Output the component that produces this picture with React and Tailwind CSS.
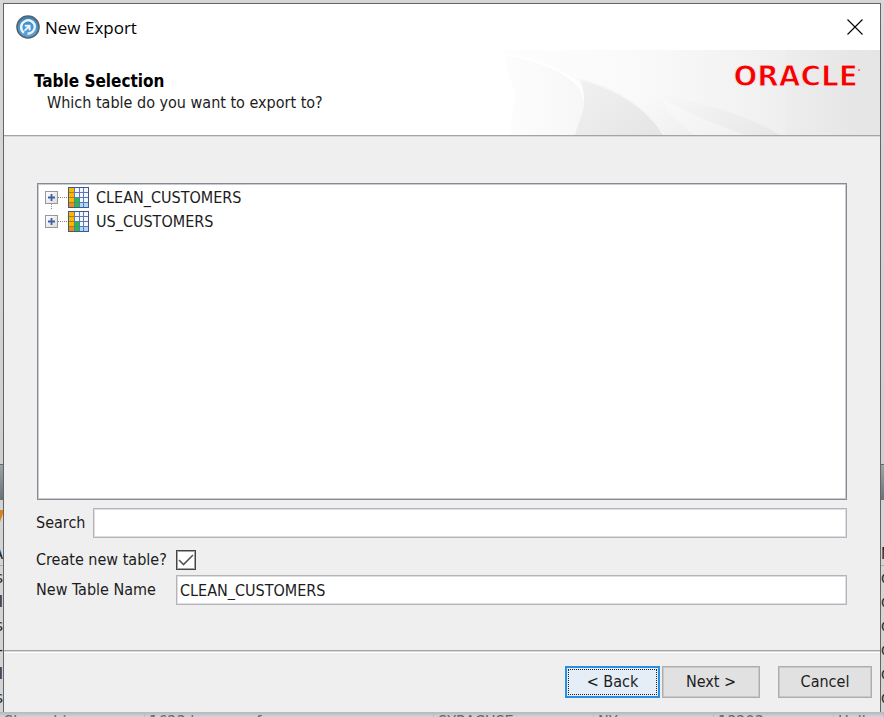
import React, { useState } from "react";

const leftRows = ["s", "I", "s", "-", "I", "s"];
const rightRows = ["d", "d", "d", "d", "d", "d"];
const bottomCells = [
  { text: "Shropshire", width: "w-[145px]" },
  { text: "1623 lane ave f", width: "w-[289px]" },
  { text: "SYRACUSE", width: "w-[160px]" },
  { text: "NY", width: "w-[120px]" },
  { text: "13203", width: "w-[120px]" },
  { text: "Hall", width: "w-[50px]" },
];

function EdgeStrip({ heading, rows, side, accent }) {
  const align = side === "left" ? "items-end" : "items-start";
  return (
    <div className={`flex w-[3px] flex-col overflow-hidden bg-[#d4d4d4] ${align}`}>
      <div className="h-[464px] w-full shrink-0 bg-gradient-to-b from-[#d8d8d8] to-[#cfcfcf]" />
      <div className="h-9 w-full shrink-0 border-t border-[#666b6e] bg-gradient-to-b from-[#9da5a9] to-[#687276]" />
      <div className="h-[42px] w-full shrink-0 pt-[10px]">
        {accent && <div className="h-3 w-full bg-[#dc8218] [clip-path:polygon(0_0,100%_0,100%_30%,0_100%)]" />}
      </div>
      <div className="h-6 shrink-0 border-b border-[#aaa] leading-6">{heading}</div>
      {rows.map((row, i) => (
        <div key={i} className="h-6 shrink-0 leading-6">{row}</div>
      ))}
    </div>
  );
}

function Backdrop() {
  return (
    <div aria-hidden="true" className="absolute inset-0 flex flex-col overflow-hidden text-base text-[#222]">
      <div className="flex min-h-0 flex-1 justify-between">
        <EdgeStrip side="left" heading="A" rows={leftRows} accent />
        <EdgeStrip side="right" heading="N" rows={rightRows} />
      </div>
      <div className="flex h-[5px] shrink-0 overflow-hidden bg-gradient-to-b from-[#b4b8bc] to-[#d2d6da] text-[#666]">
        {bottomCells.map((cell) => (
          <div key={cell.text} className={`${cell.width} shrink-0 border-r border-[#bcbcbc] pl-1 leading-5`}>
            {cell.text}
          </div>
        ))}
      </div>
    </div>
  );
}

function AppIcon() {
  return (
    <svg width="24" height="24" viewBox="0 0 24 24" aria-hidden="true">
      <defs>
        <linearGradient id="disc" x1="0" y1="0" x2="0" y2="1">
          <stop offset="0" stopColor="#3584bd" />
          <stop offset="1" stopColor="#5aa6df" />
        </linearGradient>
      </defs>
      <circle cx="12" cy="12" r="11" fill="url(#disc)" stroke="#59626b" strokeWidth="1.6" />
      <path d="M8 17.8C3.8 14.6 4.4 8.4 8.8 6.2C13.5 3.8 19.2 7 18.8 12.2C18.5 16.2 15.2 18.6 11.5 18.8" fill="none" stroke="#eaf3fa" strokeWidth="2.4" />
      <path d="M8.8 10.8H13.6V15.2" fill="none" stroke="#eaf3fa" strokeWidth="2" />
      <path d="M13.4 11L8.6 15.6" fill="none" stroke="#eaf3fa" strokeWidth="2" />
    </svg>
  );
}

function TableIcon() {
  return (
    <svg width="21" height="21" viewBox="0 0 21 21" shapeRendering="crispEdges" aria-hidden="true">
      <rect width="21" height="21" fill="#f4f7fd" />
      <rect x="1" y="1" width="5" height="14" fill="#fbb800" />
      <rect x="1" y="15" width="5" height="5" fill="#f08c10" />
      <rect x="6" y="11" width="5" height="9" fill="#1cc62c" />
      <rect x="11" y="15" width="9" height="5" fill="#a9d8ff" />
      <path d="M6.5 0V21M11.5 0V21M15.5 0V21M6 5.5H21M6 10.5H21M6 15.5H21" stroke="#5c78b8" fill="none" />
      <path d="M1 5.5H6M1 10.5H6M1 15.5H6" stroke="#b07c14" fill="none" />
      <rect x=".5" y=".5" width="20" height="20" fill="none" stroke="#435788" />
    </svg>
  );
}

function HeaderArt() {
  return (
    <svg className="absolute inset-y-0 right-0 h-full w-[420px]" viewBox="0 0 420 85" preserveAspectRatio="none" aria-hidden="true">
      <defs>
        <linearGradient id="base" x1="0" x2="1">
          <stop offset="0" stopColor="#fff" />
          <stop offset=".45" stopColor="#f9f9f9" />
          <stop offset=".75" stopColor="#f0f0f0" />
          <stop offset="1" stopColor="#e6e6e6" />
        </linearGradient>
        <linearGradient id="leaf" x1="0" y1="0" x2="1" y2="0">
          <stop offset="0" stopColor="#fdfdfd" />
          <stop offset="1" stopColor="#f7f7f7" />
        </linearGradient>
        <linearGradient id="wing" x1="0" y1="0" x2="1" y2="1">
          <stop offset="0" stopColor="#f1f1f1" />
          <stop offset="1" stopColor="#e5e5e5" />
        </linearGradient>
        <linearGradient id="shade" x1="0" y1="0" x2="1" y2="1">
          <stop offset=".3" stopColor="#ddd" stopOpacity="0" />
          <stop offset="1" stopColor="#d8d8d8" stopOpacity=".35" />
        </linearGradient>
        <linearGradient id="ray" x1="0" y1="0" x2="1" y2="1">
          <stop offset="0" stopColor="#f9f9f9" />
          <stop offset="1" stopColor="#f1f1f1" />
        </linearGradient>
      </defs>
      <rect width="420" height="85" fill="url(#base)" />
      <path d="M119 29C200 40 280 60 320 85H203C190 60 153 36 119 29Z" fill="url(#shade)" />
      <path d="M0 85L20 0H42L55 45L50 85Z" fill="#fff" />
      <path d="M43 4C80 10 124 26 124 51C124 63 117 75 115 85H50L55 45Z" fill="url(#leaf)" />
      <path d="M43 4C80 10 124 26 124 51" stroke="#fff" strokeWidth="2" fill="none" />
      <path d="M119 29C153 36 190 60 203 85H115C117 75 124 64 124 52C124 43 123 35 119 29Z" fill="url(#wing)" />
      <path d="M121 30C158 38 190 61 204 85" stroke="#f6f6f6" strokeWidth="1.5" fill="none" />
      <path d="M204 50C228 63 260 77 286 85H234C220 73 206 64 204 50Z" fill="url(#ray)" />
      <path d="M326 0H420V85H326Z" fill="#dedede" opacity=".12" />
    </svg>
  );
}

function TreeRow({ name, last }) {
  return (
    <li className="flex h-6 items-center">
      <div className="flex h-6 w-[13px] flex-col items-center">
        <div className="h-[6px]" />
        <button
          type="button"
          aria-label={`Expand ${name}`}
          className="flex size-[13px] shrink-0 items-center justify-center border border-[#989898] bg-gradient-to-br from-white to-[#dcdcdc]"
        >
          <svg width="9" height="9" viewBox="0 0 9 9" aria-hidden="true">
            <path d="M4.5 1V8M1 4.5H8" stroke="#3f5fa8" strokeWidth="1.8" fill="none" />
          </svg>
        </button>
        {!last && <div className="w-px flex-1 border-l border-dotted border-[#888]" />}
      </div>
      <div className="mr-px h-px w-[9px] border-t border-dotted border-[#888]" />
      <TableIcon />
      <span className="pt-px pl-[7px]">{name}</span>
    </li>
  );
}

const field = "min-w-0 flex-1 border border-[#b4b4ba] bg-white px-[3px] shadow-[inset_0_0_0_1px_#dedee2] outline-none";
const pushButton = "h-8 border border-[#adadad] bg-[#e1e1e1] shadow-[inset_0_0_0_1px_#c8c8c8]";

export default function App() {
  const [search, setSearch] = useState("");
  const [create, setCreate] = useState(true);
  const [tableName, setTableName] = useState("CLEAN_CUSTOMERS");

  return (
    <div className="relative flex h-screen min-h-[500px] flex-col bg-[#d6d6d6] px-[3px] pt-[3px] pb-[5px] font-['DejaVu_Sans_Condensed','DejaVu_Sans',sans-serif] text-base text-[#1c1c1c]">
      <Backdrop />
      <main className="relative flex min-h-0 flex-1 flex-col border-x border-t border-[#646464] bg-[#efefef]">
        <div className="flex h-[46px] shrink-0 items-center bg-white pr-[17px] pl-3 font-['Open_Sans',sans-serif] text-[17px] text-black">
          <AppIcon />
          <h1 className="flex-1 pt-px pl-[5px]">New Export</h1>
          <button type="button" aria-label="Close">
            <svg width="16" height="16" viewBox="0 0 16 16" aria-hidden="true">
              <path d="M.5 .5L15.5 15.5M15.5 .5L.5 15.5" stroke="#000" strokeWidth="1.1" />
            </svg>
          </button>
        </div>

        <header className="relative flex h-[86px] shrink-0 justify-between border-b border-[#a4a4a4] bg-white pr-5 pl-[30px]">
          <HeaderArt />
          <div className="relative pt-5 leading-[22px]">
            <h2 className="text-[17px] font-bold text-black">Table Selection</h2>
            <p className="pl-[13px]">Which table do you want to export to?</p>
          </div>
          <div className="relative flex pt-[11px] font-['DejaVu_Sans',sans-serif] text-[28px] leading-8 font-bold text-[#f80000] [-webkit-text-stroke:1px_#ededed]">
            ORACLE
            <span className="mt-2 size-[2px] rounded-full bg-[#f86060]" />
          </div>
        </header>

        <div className="flex min-h-0 flex-1 flex-col border-t border-[#dadada] pt-[46px] pr-[33px] pb-[45px] pl-8">
          <ul className="ml-px min-h-20 flex-1 overflow-auto border border-[#868c92] bg-white py-px pl-[7px] shadow-[inset_0_0_0_1px_#c8ccd0]">
            <TreeRow name="CLEAN_CUSTOMERS" />
            <TreeRow name="US_CUSTOMERS" last />
          </ul>
          <div className="mt-2 flex h-[30px] shrink-0 items-center">
            <label htmlFor="search" className="w-[57px]">Search</label>
            <input id="search" value={search} onChange={(e) => setSearch(e.target.value)} className={`${field} h-[30px]`} />
          </div>
          <div className="mt-3 flex h-5 shrink-0 items-center">
            <label htmlFor="create" className="w-[140px]">Create new table?</label>
            <span className="relative flex size-5">
              <input
                id="create"
                type="checkbox"
                checked={create}
                onChange={(e) => setCreate(e.target.checked)}
                className="size-5 appearance-none border border-[#444] bg-white shadow-[inset_0_0_0_1px_#a4a4a4]"
              />
              {create && (
                <svg className="pointer-events-none absolute inset-0" width="20" height="20" viewBox="0 0 20 20" aria-hidden="true">
                  <path d="M3 10L7.5 14.5L17 5" stroke="#555" strokeWidth="1.6" fill="none" />
                </svg>
              )}
            </span>
          </div>
          <div className="mt-[5px] flex h-[30px] shrink-0 items-center">
            <label htmlFor="name" className="w-[140px]">New Table Name</label>
            <input id="name" value={tableName} onChange={(e) => setTableName(e.target.value)} className={`${field} h-[30px]`} />
          </div>
        </div>

        <footer className="flex h-[62px] shrink-0 items-center justify-end border-t border-[#a4a4a4] pr-2 shadow-[inset_0_1px_0_#d8d8d8,inset_0_2px_0_#fff]">
          <button type="button" className="h-8 w-[95px] border-2 border-[#2a8ee2] bg-[#e5edf6] p-px">
            <span className="flex h-full items-center justify-center border border-dotted border-[#222]">&lt; Back</span>
          </button>
          <button type="button" className={`${pushButton} ml-[2px] w-[98px]`}>Next &gt;</button>
          <button type="button" className={`${pushButton} ml-[18px] w-[94px]`}>Cancel</button>
        </footer>
      </main>
    </div>
  );
}
